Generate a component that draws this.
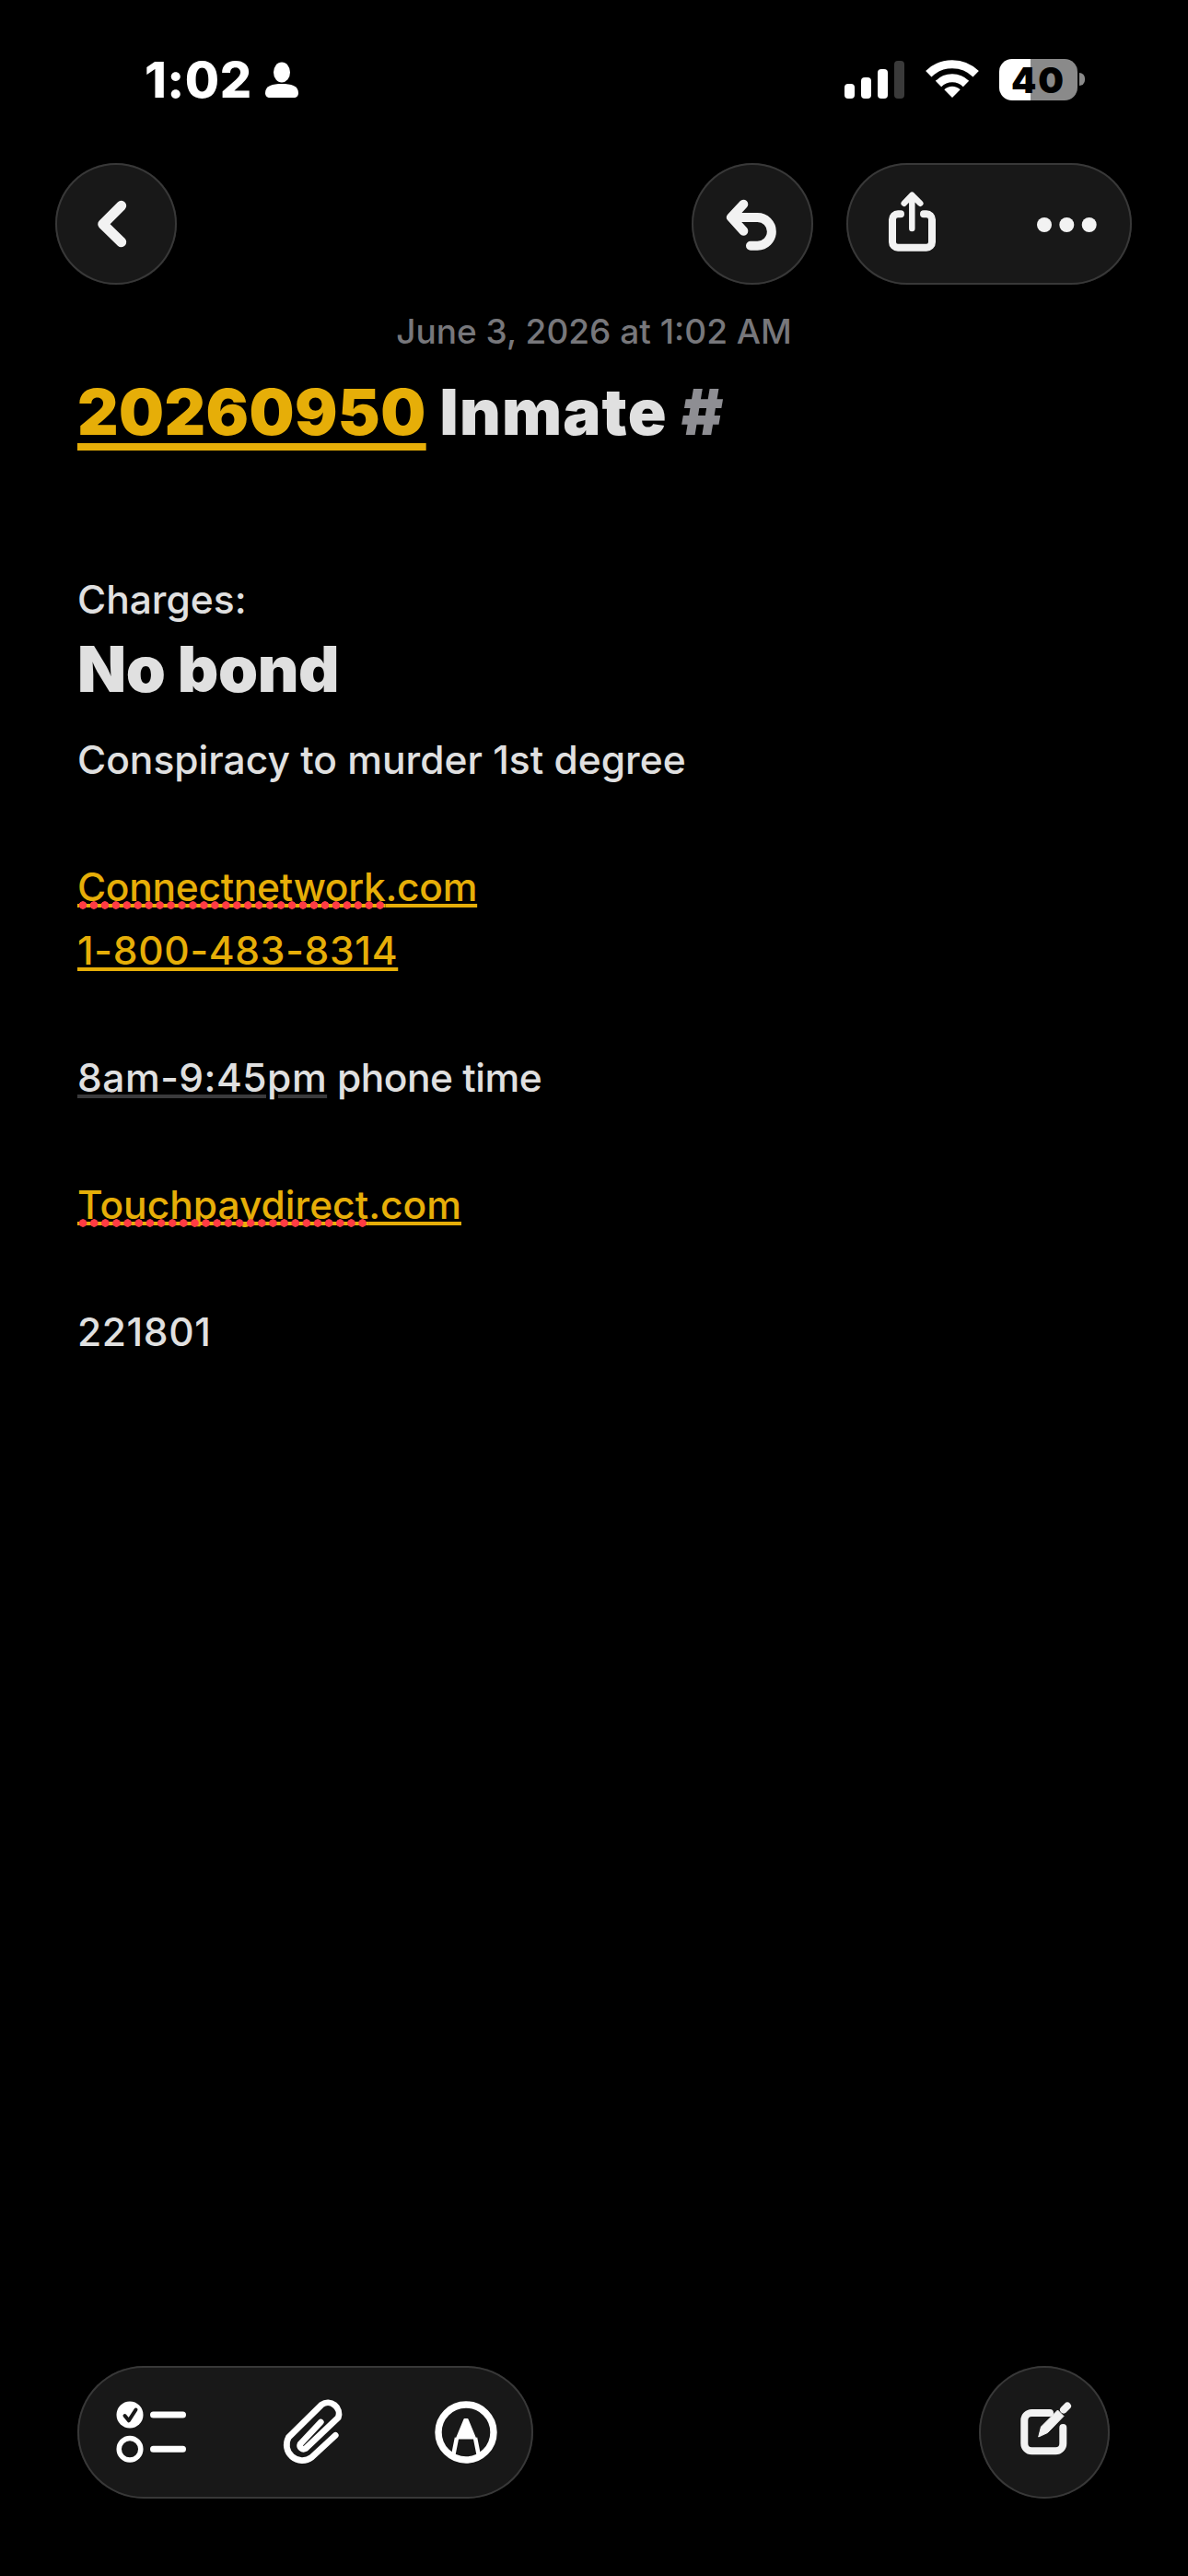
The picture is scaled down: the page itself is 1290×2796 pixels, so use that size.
<div class="page">
  <header class="status">
    <div class="clock">
      <span class="time">1:02</span>
      <svg class="person" width="36" height="40" viewBox="0 0 36 40" aria-hidden="true">
        <ellipse cx="18" cy="11.500" rx="9" ry="11" fill="#fff"/>
        <path d="M0 34C0 26 8 24 18 24s18 2 18 10c0 3-2 5-5 5H5c-3 0-5-2-5-5z" fill="#fff"/>
      </svg>
    </div>
    <div class="indicators">
      <svg width="65" height="41" viewBox="0 0 65 41" aria-hidden="true">
        <rect x="0" y="25" width="11" height="16" rx="4" fill="#fff"/>
        <rect x="18" y="18" width="11" height="23" rx="4" fill="#fff"/>
        <rect x="36" y="9" width="11" height="32" rx="4" fill="#fff"/>
        <rect x="54" y="0" width="11" height="41" rx="4" fill="#3a3a3a"/>
      </svg>
      <svg class="wifi" width="58" height="43" viewBox="-29 -42 58 43" aria-hidden="true">
        <path d="M-25.700 -25.700A36.500 36.500 0 0 1 25.700 -25.700M-15 -15A21.200 21.200 0 0 1 15 -15" fill="none" stroke="#fff" stroke-width="9"/>
        <path d="M0 0L-8.700 -8.700A12.300 12.300 0 0 1 8.700 -8.700Z" fill="#fff"/>
      </svg>
      <div class="battery">
        <span class="level">40</span>
      </div>
    </div>
  </header>

  <nav class="toolbar">
    <button class="round" aria-label="Back">
      <svg width="132" height="132" viewBox="0 0 132 132" aria-hidden="true">
        <path d="M71.700 46.300L51.700 66.300L71.700 85.700" fill="none" stroke="#f2f2f2" stroke-width="11" stroke-linecap="round" stroke-linejoin="round"/>
      </svg>
    </button>
    <div class="spacer"></div>
    <button class="round" aria-label="Undo">
      <svg width="132" height="132" viewBox="0 0 132 132" aria-hidden="true">
        <path d="M56.300 44.700L43 59L56.300 73.700M43 59H71.500A15.300 15.300 0 0 1 71.500 89.700H64" fill="none" stroke="#f2f2f2" stroke-width="10" stroke-linecap="round" stroke-linejoin="round"/>
      </svg>
    </button>
    <div class="pill share">
      <svg width="310" height="132" viewBox="0 0 310 132" aria-hidden="true">
        <path d="M59 55.300H56A6 6 0 0 0 50 61.300V85.700A6 6 0 0 0 56 91.700H87A6 6 0 0 0 93 85.700V61.300A6 6 0 0 0 87 55.300H84" fill="none" stroke="#f2f2f2" stroke-width="8" stroke-linecap="round"/>
        <path d="M71.300 71V36M62.700 43.700L71.300 34.700L80.300 43.700" fill="none" stroke="#f2f2f2" stroke-width="6.500" stroke-linecap="round" stroke-linejoin="round"/>
        <circle cx="215" cy="67" r="8" fill="#f2f2f2"/>
        <circle cx="239.300" cy="67" r="8" fill="#f2f2f2"/>
        <circle cx="263.700" cy="67" r="8" fill="#f2f2f2"/>
      </svg>
    </div>
  </nav>

  <p class="date">June 3, 2026 at 1:02 AM</p>

  <main class="note">
    <h1 class="title"><a class="title-link" href="#top">20260950</a> Inmate <span class="hash">#</span></h1>
    <p class="line charges">Charges:</p>
    <h2 class="heading">No bond</h2>
    <p class="line conspiracy">Conspiracy to murder 1st degree</p>
    <p class="line gap"><a class="link connect" href="#top"><span class="typo">Connectnetwork</span>.com</a></p>
    <p class="line"><a class="link phone" href="#top">1-800-483-8314</a></p>
    <p class="line gap phone-time"><span class="detected">8am-9:45pm</span> phone time</p>
    <p class="line gap"><a class="link touch" href="#top"><span class="typo">Touchpaydirect</span>.com</a></p>
    <p class="line gap digits">221801</p>
  </main>

  <footer class="bottom">
    <div class="pill tools">
      <svg width="495" height="144" viewBox="0 0 495 144" aria-hidden="true">
        <circle cx="57" cy="53" r="14.500" fill="#fff"/>
        <path d="M51.500 54L55.800 59.300L63.500 47.500" fill="none" stroke="#181818" stroke-width="4" stroke-linecap="round" stroke-linejoin="round"/>
        <circle cx="57" cy="90.300" r="11.800" fill="none" stroke="#fff" stroke-width="5.500"/>
        <path d="M82.500 53H114.500M82.500 90.300H114.500" stroke="#fff" stroke-width="7" stroke-linecap="round"/>
        <path d="M280.300 75.300L254.300 99.300A17 17 0 0 1 229.300 77.500L265.300 42A12 12 0 0 1 283.300 56L247.700 89.700A4 4 0 0 1 242 84.700L264.300 61" fill="none" stroke="#fff" stroke-width="6.700" stroke-linecap="round" stroke-linejoin="round"/>
        <circle cx="422" cy="72" r="30" fill="none" stroke="#fff" stroke-width="7.400"/>
        <path d="M420.500 58H423.500L432 78.500H412Z" fill="#fff" stroke="#fff" stroke-width="2" stroke-linejoin="round"/>
        <path d="M412 78L408 98M432 78L436 98" fill="none" stroke="#fff" stroke-width="4.500"/>
      </svg>
    </div>
    <button class="round compose" aria-label="New note">
      <svg width="142" height="144" viewBox="0 0 142 144" aria-hidden="true">
        <path d="M77 51H57.300A8 8 0 0 0 49.300 59V84.300A8 8 0 0 0 57.300 92.300H83.300A8 8 0 0 0 91.300 84.300V67" fill="none" stroke="#f2f2f2" stroke-width="8" stroke-linecap="round"/>
        <path d="M64.700 77L67.500 66L85.500 48L92 54.500L74.500 72.500Z" fill="#f2f2f2" stroke="#f2f2f2" stroke-width="1" stroke-linejoin="round"/>
        <path d="M92 47.500L96 43.500" stroke="#f2f2f2" stroke-width="8" stroke-linecap="round"/>
      </svg>
    </button>
  </footer>
</div>

<style>
  :global(body) {
    margin: 0;
    background: #000;
  }
  .page {
    width: 1290px;
    height: 2796px;
    background: #000;
    display: flex;
    flex-direction: column;
    font-family: Inter, "Noto Sans", sans-serif;
    overflow: hidden;
  }
  .status {
    display: flex;
    justify-content: space-between;
    align-items: flex-start;
    height: 113px;
    padding: 64px 120px 0 157px;
    box-sizing: border-box;
  }
  .clock {
    display: flex;
    align-items: center;
    gap: 14px;
    height: 45px;
    color: #fff;
  }
  .time {
    font-size: 54px;
    font-weight: 800;
    line-height: 45px;
    letter-spacing: 0.5px;
  }
  .person {
    display: block;
  }
  .indicators {
    display: flex;
    align-items: flex-end;
    height: 45px;
    color: #000;
  }
  .indicators svg {
    display: block;
    overflow: visible;
    margin-bottom: 2px;
  }
  .wifi {
    margin-left: 23px;
  }
  .battery {
    position: relative;
    width: 85px;
    height: 45px;
    margin-left: 22px;
    border-radius: 14px;
    background: linear-gradient(90deg, #fff 0 34px, #8a8a8a 34px);
    display: flex;
    align-items: center;
    justify-content: center;
  }
  .battery::after {
    content: "";
    position: absolute;
    left: 87px;
    top: 15px;
    width: 6px;
    height: 14px;
    border-radius: 0 7px 7px 0;
    background: #8a8a8a;
  }
  .level {
    font-size: 39px;
    font-weight: 900;
    line-height: 43px;
    letter-spacing: 2px;
    color: #000;
  }
  .toolbar {
    display: flex;
    align-items: center;
    gap: 36px;
    height: 132px;
    margin-top: 64px;
    padding: 0 61px 0 60px;
  }
  .spacer {
    flex: 1;
  }
  .round,
  .pill {
    padding: 0;
    background: #181818;
    border: 0;
    box-shadow: inset 0 0 0 2px #383838;
    flex: none;
  }
  .round {
    width: 132px;
    height: 132px;
    border-radius: 50%;
  }
  .round svg,
  .pill svg {
    display: block;
  }
  .pill {
    border-radius: 72px;
  }
  .share {
    width: 310px;
    height: 132px;
  }
  .date {
    margin: 30px 0 0;
    text-align: center;
    font-size: 37px;
    font-weight: 500;
    line-height: 42px;
    color: #77777b;
  }
  .note {
    padding: 0 84px;
    color: #e0e0e0;
  }
  .title {
    margin: 25px 0 0;
    font-size: 69px;
    font-weight: 900;
    letter-spacing: 1.2px;
    line-height: 82px;
    white-space: nowrap;
  }
  .title-link {
    color: #e6ae08;
    letter-spacing: 0.4px;
    text-decoration: underline;
    text-decoration-thickness: 8px;
    text-underline-offset: 9px;
    text-decoration-skip-ink: none;
  }
  .hash {
    color: #8e8e93;
  }
  .line {
    margin: 0;
    font-size: 42.500px;
    line-height: 69px;
    font-weight: 500;
    white-space: nowrap;
  }
  .connect {
    letter-spacing: -0.3px;
  }
  .touch {
    letter-spacing: 0;
  }
  .phone {
    letter-spacing: 0.7px;
  }
  .digits {
    letter-spacing: 0.6px;
  }
  .phone-time {
    letter-spacing: -0.5px;
  }
  .charges {
    margin-top: 128px;
  }
  .heading {
    margin: 0;
    font-size: 69px;
    font-weight: 900;
    letter-spacing: -0.4px;
    line-height: 82px;
  }
  .conspiracy {
    margin-top: 23px;
  }
  .gap {
    margin-top: 69px;
  }
  .link {
    position: relative;
    color: #e6ae08;
    text-decoration: underline;
    text-decoration-thickness: 4px;
    text-underline-offset: 3px;
    text-decoration-skip-ink: none;
  }
  .typo {
    position: relative;
  }
  .typo::after {
    content: "";
    position: absolute;
    left: 0;
    right: 0;
    bottom: 1px;
    height: 9px;
    background: radial-gradient(circle closest-side, #ff3b44 88%, transparent 100%) 0 0 / 12px 9px round no-repeat;
  }
  .detected {
    letter-spacing: 0.5px;
    text-decoration: underline;
    text-decoration-color: #3a3a3c;
    text-decoration-thickness: 4px;
    text-underline-offset: 3px;
    text-decoration-skip-ink: auto;
  }
  .bottom {
    display: flex;
    justify-content: space-between;
    align-items: center;
    margin-top: auto;
    margin-bottom: 84px;
    padding: 0 85px 0 84px;
  }
  .tools {
    width: 495px;
    height: 144px;
  }
  .compose {
    width: 142px;
    height: 144px;
  }
</style>
